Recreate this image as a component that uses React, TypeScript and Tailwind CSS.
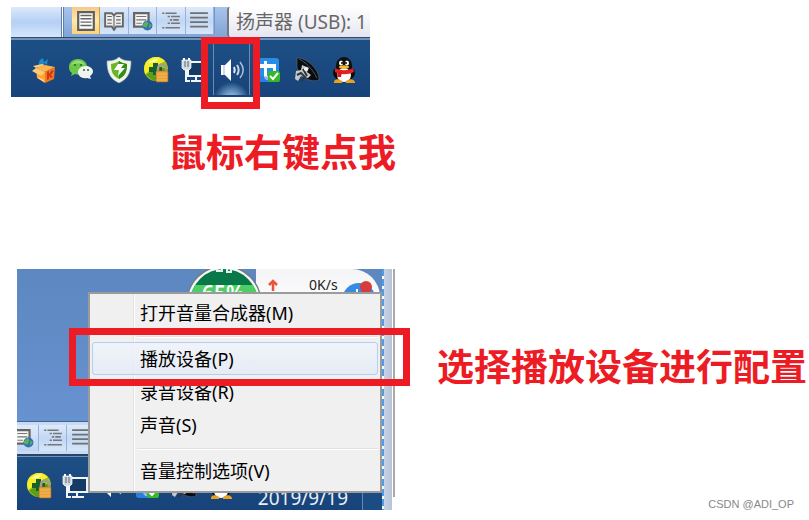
import type { ReactNode } from 'react';

const ui = "font-['Noto_Sans','Noto_Sans_CJK_SC',sans-serif]";

function Glyph({ children, label }: { children: ReactNode; label: string }) {
  return (
    <svg viewBox="0 0 26 26" className="size-[26px] shrink-0" role="img" aria-label={label}>
      {children}
    </svg>
  );
}

function BoxIcon() {
  return (
    <Glyph label="Box">
      <path d="M8 10C7 5 9 2 12 1l1 4 4-3-1 6-3-2-1 5z" fill="#2187c8" />
      <path d="M5 11l9-3 10 2-10 5z" fill="#ffb54a" />
      <path d="M5 11l9 4v11l-8-5z" fill="#ffa42e" />
      <path d="M14 15l10-5-1 12-9 4z" fill="#ef7a22" />
      <path d="M5 11l-4 3 9 5 4-4zM5 11L2 9l9-2 3 1z" fill="#ffcb78" />
      <path d="M7 20l6 3v2l-6-4z" fill="#ffd894" />
      <path d="M16 15l2-1v3l3-4 2 1-3 4 2 2-2 1-2-2v3l-2 1z" fill="#d4351b" />
    </Glyph>
  );
}

function WeChatIcon() {
  return (
    <Glyph label="WeChat">
      <path d="M10 2C4 2 1 6 1 10c0 3 1 5 3 6l-1 3 4-2c8 2 12-2 12-7 0-5-4-8-9-8z" fill="#6cc848" />
      <path d="M3 8c3-6 11-6 14 0-4-2-10-2-14 0z" fill="#94df76" />
      <path d="M18 9c-5 0-8 3-8 6 0 4 4 7 9 6l4 1-1-3c6-4 2-10-4-10z" fill="#f1f3f3" />
      <g fill="#29651f">
        <circle cx="7" cy="8" r="1" />
        <circle cx="13" cy="8" r="1" />
        <circle cx="16" cy="13" r="1" />
        <circle cx="20" cy="13" r="1" />
      </g>
    </Glyph>
  );
}

function ShieldIcon() {
  return (
    <Glyph label="Shield">
      <path d="M13 0c3 3 7 4 12 4 0 11-3 18-12 22C4 22 1 15 1 4c5 0 9-1 12-4z" fill="#f0f5eb" stroke="#a9b6a5" strokeWidth=".6" />
      <path d="M13 4c3 2 5 2 8 3 0 8-2 12-8 15-6-3-8-7-8-15 3-1 5-1 8-3z" fill="#6bb52b" />
      <path d="M13 4c3 2 5 2 8 3 0 8-2 12-8 15z" fill="#358b14" />
      <path d="M12 7h6l-3 4h4l-7 8 1-6H8z" fill="#fff" />
    </Glyph>
  );
}

function LockIcon() {
  return (
    <Glyph label="Guard">
      <circle cx="13" cy="12" r="12" fill="#a4c512" />
      <path d="M1 12a12 12 0 0 1 21-8L12 10 2 17z" fill="#f6ee27" />
      <path d="M5 6c3-4 7-5 11-4-3 3-7 4-11 4z" fill="#fffb9a" />
      <path d="M3 18l9-7h8l5 1c0 9-9 14-16 11z" fill="#5b9e1b" />
      <path d="M10 6h5v4h4v5h-4v3h-5v-3H6v-5h4z" fill="#17602b" />
      <path d="M15 15v-3c0-6 8-6 8 0v3" fill="none" stroke="#a19d92" strokeWidth="2.5" />
      <rect x="13" y="14" width="12" height="11" rx="1" fill="#e8a23a" stroke="#aa6d20" strokeWidth=".6" />
      <path d="M14 17h10M14 20h10M14 23h10" stroke="#f3bb5c" />
    </Glyph>
  );
}

function NetworkIcon() {
  return (
    <Glyph label="Network">
      <rect x="7" y="5" width="18" height="14" fill="#143a66" stroke="#f2f5f8" strokeWidth="2" />
      <path d="M15 19v4m-5 1h12" stroke="#f2f5f8" strokeWidth="2" />
      <path d="M5 10v14h4" fill="none" stroke="#f2f5f8" strokeWidth="2" />
      <path d="M1 3h9v8l-2 2H3l-2-2z" fill="#d3d9df" stroke="#fff" strokeWidth=".7" />
      <path d="M3 3V1m5 2V1" stroke="#fff" strokeWidth="2" />
      <path d="M4 4v6m3-6v6" stroke="#54677c" />
    </Glyph>
  );
}

function SpeakerIcon() {
  return (
    <Glyph label="Volume">
      <path d="M2 8h4l6-6v22l-6-6H2z" fill="#fff" />
      <path d="M5 8v10" stroke="#a3b5c9" />
      <path d="M15 10c1 2 1 4 0 6" fill="none" stroke="#e6edf4" strokeWidth="2" />
      <path d="M18 8c2 3 2 7 0 10" fill="none" stroke="#c8d6e4" strokeWidth="2" />
      <path d="M21 5c4 5 4 11 0 16" fill="none" stroke="#aebfd1" strokeWidth="1.5" />
    </Glyph>
  );
}

function SyncIcon() {
  return (
    <Glyph label="Transfer">
      <rect x="1" y="1" width="22" height="24" rx="3" fill="#278de7" />
      <path d="M4 7h4V4h3v3h9v13h-3v-9h-6v7c0 2 2 2 4 2v3c-5 1-7-1-7-4v-8H4z" fill="#fff" />
      <path d="M1 22v-4l12 2v5H4c-2 0-3-1-3-3z" fill="#2c74df" opacity=".5" />
      <rect x="12" y="14" width="12" height="11" rx="2" fill="#35ba27" />
      <path d="M14 19l3 3 5-6" fill="none" stroke="#fff" strokeWidth="2" />
    </Glyph>
  );
}

function DishIcon() {
  return (
    <Glyph label="Satellite dish">
      <path d="M3 1C11 0 26 12 25 23c-7 3-18-2-22-12z" fill="#090d11" stroke="#53616c" strokeWidth=".7" />
      <path d="M5 2c6 3 13 9 18 19" fill="none" stroke="#5c646a" strokeWidth=".8" />
      <path d="M8 8l7 3-2 4 4 3-3 3-7-2-3 5-3-2 1-8 5-1z" fill="#c5c9c9" />
      <path d="M3 18l4-2 4 4-4 4m2-12 4 7" stroke="#30373c" strokeWidth="2" fill="none" />
      <circle cx="12" cy="12" r="2" fill="#f1f2f2" />
    </Glyph>
  );
}

function PenguinIcon() {
  return (
    <Glyph label="QQ">
      <ellipse cx="13" cy="16" rx="11" ry="8" fill="#080808" />
      <path d="M5 12C3-4 23-4 21 12z" fill="#111" />
      <ellipse cx="13" cy="18" rx="7" ry="7" fill="#fff" />
      <ellipse cx="10" cy="6" rx="2" ry="2.6" fill="#fff" />
      <ellipse cx="16" cy="6" rx="2" ry="2.6" fill="#fff" />
      <circle cx="11" cy="6" r="1" />
      <circle cx="15" cy="6" r="1" />
      <ellipse cx="13" cy="10" rx="5" ry="1.8" fill="#f7b726" />
      <path d="M4 11c5 3 13 3 18 0l1 4c-6 3-14 3-19 0z" fill="#e52024" />
      <path d="M7 14l4 1-1 5H6z" fill="#d8171d" />
      <path d="M3 25c0-3 5-4 8-1v2H3zm12-1c4-3 8-2 9 1v1h-9z" fill="#eaa21e" />
    </Glyph>
  );
}

type View = 'page' | 'book' | 'web' | 'outline' | 'draft';

function ViewIcon({ view }: { view: View }) {
  return (
    <svg viewBox="1 1 18 18" className="size-5 shrink-0" fill="none" aria-hidden="true">
      {view === 'page' && (
        <>
          <path d="M3 2h14v16H3z" fill="#fff" stroke="#5f5f5f" strokeWidth="2" />
          <path d="M5 5h10M5 8h10M5 11h10M5 14h10" stroke="#666" strokeWidth="1.3" />
        </>
      )}
      {view === 'book' && (
        <>
          <path d="M2 3h6l2 2 2-2h6v12h-6l-2 3-2-3H2z" fill="#eee" stroke="#666" strokeWidth="1.7" />
          <path d="M10 5v12M4 6h4M4 9h4M4 12h4m4-6h4m-4 3h4m-4 3h4" stroke="#666" />
        </>
      )}
      {view === 'web' && (
        <>
          <path d="M2 3h13v12H2z" fill="#f5f5f5" stroke="#666" strokeWidth="2" />
          <path d="M4 6h9M4 9h9M4 12h5" stroke="#777" />
          <circle cx="14" cy="14" r="4.5" fill="#2c73b0" />
          <path d="M10 13l3-3 2 2-2 4-3-1zm6-1 2 2-3 3z" fill="#5fae5b" />
        </>
      )}
      {view === 'outline' && (
        <path d="M2 3h2m1 0h10M7 6h2m1 0h8M9 9h2m1 0h5M7 12h2m1 0h8M2 16h2m1 0h13" stroke="#777" strokeWidth="1.4" />
      )}
      {view === 'draft' && <path d="M2 3h16M2 7h16M2 11h16M2 15h16" stroke="#707070" strokeWidth="1.6" />}
    </svg>
  );
}

function ViewButton({ view, active = false }: { view: View; active?: boolean }) {
  const tone = active
    ? 'border-[#d59a42] bg-linear-to-b from-[#f5c98b] via-[#ffe9a8] to-[#fbd27a]'
    : 'border-[#96b2dd] bg-linear-to-b from-[#dfebfa] via-[#c1d7f4] to-[#d6e6fa]';
  return (
    <button type="button" aria-label={`${view} view`} className={`flex flex-1 items-center justify-center overflow-hidden border-r ${tone}`}>
      <ViewIcon view={view} />
    </button>
  );
}

function TrayButton({ children }: { children: ReactNode }) {
  return (
    <button type="button" className="flex items-center justify-center">
      {children}
    </button>
  );
}

function MenuItem({ children, active = false }: { children: ReactNode; active?: boolean }) {
  return (
    <li role="none">
      <button
        type="button"
        role="menuitem"
        className={`flex h-[33px] w-full items-center rounded-[3px] border pl-[47px] text-left text-[18px] leading-6 text-black ${
          active ? 'border-[#aecff7] bg-linear-to-b from-[#f1f4f9]/80 to-[#e3ebf8]/80' : 'border-transparent'
        }`}
      >
        {children}
      </button>
    </li>
  );
}

function MenuSeparator() {
  return <li role="separator" className="mt-[7px] mb-1 ml-[45px] h-[2px] border-t border-[#e0e0e0] bg-white" />;
}

function TrayShot() {
  return (
    <section className="relative w-[359px]">
      <div className="flex h-[30px] bg-linear-to-b from-[#a9c4ea] to-[#7fa4d6]">
        <div className="w-[50px] bg-linear-to-b from-[#dbe9fb] via-[#b5d0f4] to-[#d5e6fc]" />
        <div className="w-[3px] border-x border-[#5d7daf] bg-white" />
        <div className="mb-[3px] ml-2 flex w-[143px] border-r border-[#7395c8]">
          <ViewButton view="page" active />
          <ViewButton view="book" />
          <ViewButton view="web" />
          <ViewButton view="outline" />
          <ViewButton view="draft" />
        </div>
        <div className="ml-3 flex flex-1 items-center overflow-hidden rounded-l-[3px] border-l-2 border-[#75777d] bg-linear-to-b from-white to-[#e5e6f0] pl-[7px] text-[19px] leading-6 whitespace-nowrap text-[#666]">
          扬声器 (USB): 1
        </div>
      </div>
      <div className="h-[3px] border-t border-[#32496b] bg-[#7193ba]" />
      <div className="grid h-[57px] grid-cols-9 bg-linear-to-b from-[#1d4f85] to-[#17437a] pt-1 pr-[7px] pb-[2px] pl-[14px]">
        <TrayButton><BoxIcon /></TrayButton>
        <TrayButton><WeChatIcon /></TrayButton>
        <TrayButton><ShieldIcon /></TrayButton>
        <TrayButton><LockIcon /></TrayButton>
        <TrayButton><NetworkIcon /></TrayButton>
        <button type="button" className="flex items-center justify-center border-x border-[#6e8dae] bg-[radial-gradient(circle_at_50%_110%,#b4d3ec_0px,#6e9bc4_8px,transparent_18px)]">
          <SpeakerIcon />
        </button>
        <TrayButton><SyncIcon /></TrayButton>
        <TrayButton><DishIcon /></TrayButton>
        <TrayButton><PenguinIcon /></TrayButton>
      </div>
      <div className="pointer-events-none absolute top-[30px] left-[190px] h-[72px] w-[59px] border-[7px] border-[#ed1c24]" />
    </section>
  );
}

function SpeedWidget() {
  return (
    <div className="absolute top-0 right-0 h-6 w-[193px] overflow-hidden">
      <div className="absolute top-0 right-[2px] h-12 w-[124px] rounded-tr-[28px] bg-linear-to-b from-[#f5f5f7] to-white" />
      <svg viewBox="0 0 193 24" className="absolute inset-0 h-6 w-[193px]" aria-hidden="true">
        <circle cx="35" cy="34" r="37" fill="#f5f8f8" stroke="#747d84" strokeWidth="1.5" />
        <circle cx="35" cy="34" r="34" fill="#087849" />
        <path d="M6 16h58l4 8H2z" fill="#4bce64" />
        <path d="M28 0v2h5V0m5 0v3h4V0" fill="none" stroke="#e4f2eb" strokeWidth="2" />
        <path d="M84 22V12m-4 4 4-4 4 4" fill="none" stroke="#ed5138" strokeWidth="2.5" />
        <circle cx="170" cy="31" r="17" fill="#378be0" />
        <path d="M168 20v4" stroke="#fff" strokeWidth="2" />
        <circle cx="177" cy="18" r="6" fill="#d83b3b" />
      </svg>
      <span className="absolute top-[12px] left-[13px] text-[21px] leading-6 font-semibold text-white">65%</span>
      <span className="absolute top-[7px] left-[120px] text-[14px] leading-[18px] text-[#222]">0K/s</span>
    </div>
  );
}

function MenuShot() {
  return (
    <section className="relative flex h-[241px] w-[378px] shrink-0">
      <div className="relative flex flex-1 flex-col overflow-hidden">
        <div className="relative flex-1 bg-linear-to-b from-[#5c87bf] to-[#6792d0]">
          <SpeedWidget />
        </div>
        <div className="flex h-[33px] border-t border-[#45648e] bg-[#c8dbf5] py-[3px]">
          <div className="flex w-[106px]">
            <button type="button" aria-label="web view" className="flex w-[22px] items-center justify-end overflow-hidden border-r border-[#96b2dd] bg-linear-to-b from-[#dfebfa] to-[#bdd4f3] pr-1">
              <ViewIcon view="web" />
            </button>
            <ViewButton view="outline" />
            <ViewButton view="draft" />
            <ViewButton view="page" />
          </div>
        </div>
        <div className="h-[3px] border-t-2 border-[#294469] bg-[#7193ba]" />
        <div className="flex h-[53px] bg-linear-to-b from-[#1d4f85] to-[#17437a]">
          <div className="grid w-[222px] grid-cols-6 pt-1 pl-1">
            <TrayButton><LockIcon /></TrayButton>
            <TrayButton><NetworkIcon /></TrayButton>
            <TrayButton><SpeakerIcon /></TrayButton>
            <TrayButton><SyncIcon /></TrayButton>
            <TrayButton><DishIcon /></TrayButton>
            <TrayButton><PenguinIcon /></TrayButton>
          </div>
          <time className="flex flex-1 items-end justify-end pr-[14px] text-[19px] leading-6 text-[#e8eff6]">2019/9/19</time>
          <button type="button" aria-label="Show desktop" className="w-[20px] border-l border-[#6787ac] bg-[#1b4d84]" />
        </div>
      </div>
      <div className="w-[2px] bg-[repeating-linear-gradient(to_bottom,#4f9be8_0px,#4f9be8_7px,#fff_7px,#fff_10px)]" />
      <div className="w-[8px] bg-linear-to-r from-[#c9d2e3] to-[#b6c3da]" />
      <div className="mb-[13px] ml-px w-[2px] bg-[#a9a9a9]" />
      <menu
        role="menu"
        className="absolute top-[23px] left-[71px] h-[201px] w-[294px] border-2 border-[#9b9b9b] bg-[#f0f0f0] bg-[linear-gradient(to_right,transparent_43px,#e2e2e2_43px,#e2e2e2_44px,#fff_44px,#fff_45px,transparent_45px)] p-[2px]"
      >
        <MenuItem>打开音量合成器(M)</MenuItem>
        <MenuSeparator />
        <MenuItem active>播放设备(P)</MenuItem>
        <MenuItem>录音设备(R)</MenuItem>
        <MenuItem>声音(S)</MenuItem>
        <MenuSeparator />
        <MenuItem>音量控制选项(V)</MenuItem>
      </menu>
      <div className="pointer-events-none absolute top-[59px] left-[52px] h-[58px] w-[341px] border-[7px] border-[#ed1c24]" />
    </section>
  );
}

function Caption({ children, large = false }: { children: ReactNode; large?: boolean }) {
  return (
    <h2 className={`leading-[44px] font-bold whitespace-nowrap text-[#ed1c24] ${large ? 'text-[38px]' : 'text-[37px]'}`}>
      {children}
    </h2>
  );
}

export default function App() {
  return (
    <main className={`bg-white pt-[7px] ${ui}`}>
      <div className="pl-[11px]">
        <TrayShot />
      </div>
      <div className="mt-8 pl-[168px]">
        <Caption large>鼠标右键点我</Caption>
      </div>
      <div className="mt-24 flex items-start pl-[17px]">
        <MenuShot />
        <div className="flex min-w-0 flex-1 flex-col self-stretch pt-[76px] pl-[42px]">
          <Caption>选择播放设备进行配置</Caption>
          <p className="mt-auto pr-[15px] text-right font-['Liberation_Sans',sans-serif] text-[11px] leading-[12px] text-[#888]">CSDN @ADI_OP</p>
        </div>
      </div>
    </main>
  );
}
